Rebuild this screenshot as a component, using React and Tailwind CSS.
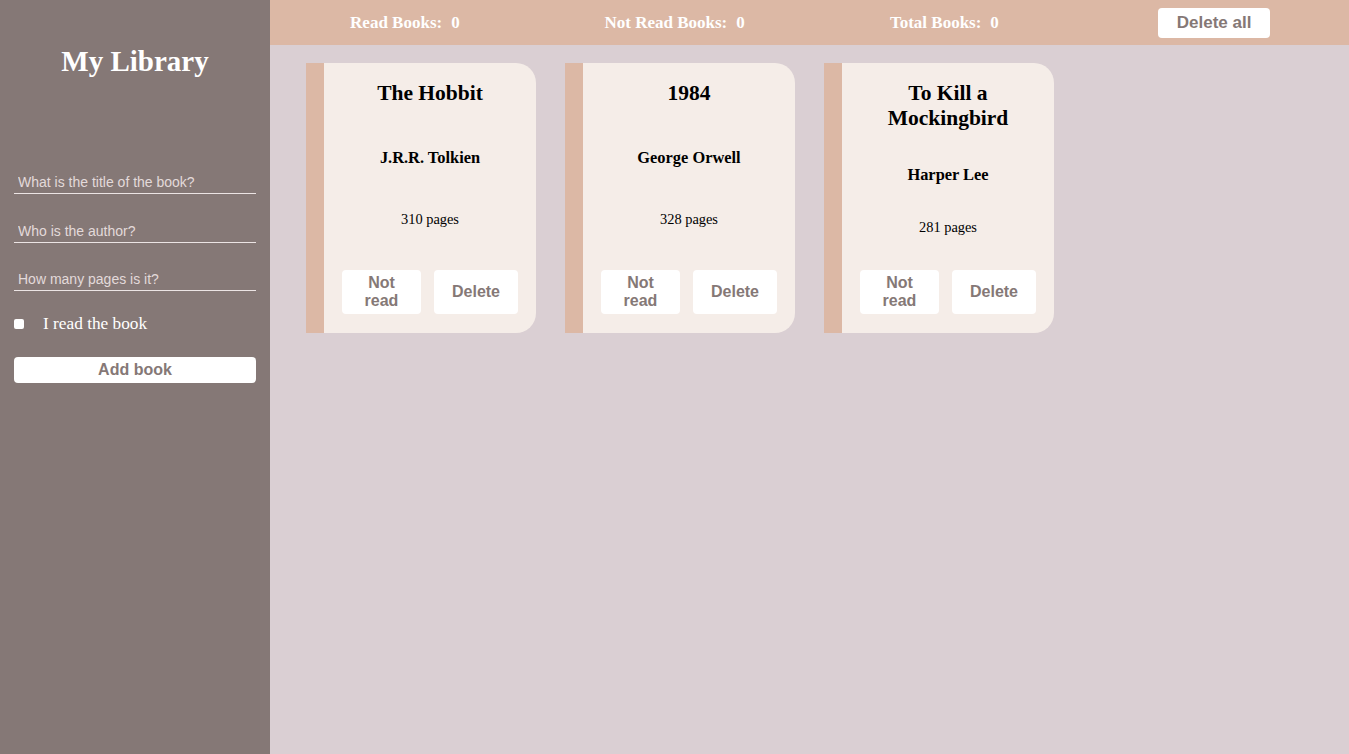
import { useState } from 'react';

const books = [
  { id: 1, title: 'The Hobbit', author: 'J.R.R. Tolkien', pages: 310, read: false },
  { id: 2, title: '1984', author: 'George Orwell', pages: 328, read: false },
  { id: 3, title: 'To Kill a Mockingbird', author: 'Harper Lee', pages: 281, read: false },
];

const serif = "font-['Liberation_Serif',serif]";
const sans = "font-['Liberation_Sans',Arial,sans-serif]";

function BookCard({ book }) {
  return (
    <div className="w-[230px] h-[270px] flex border-l-[18px] border-[#dcb8a5] bg-[#f5ede8] rounded-r-[20px]">
      <div className="flex-1 flex flex-col justify-between items-center px-[18px] pt-[18px] pb-[19px] text-black text-center">
        <h2 className={`${serif} font-bold text-[21.5px] leading-[25px]`}>{book.title}</h2>
        <p className={`${serif} font-bold text-[16.4px] leading-[18px]`}>{book.author}</p>
        <p className={`${serif} text-[14.4px] leading-[16px]`}>{book.pages} pages</p>
        <div className="w-full flex justify-between">
          <button className={`${sans} w-[79px] h-[44px] px-[16px] bg-white rounded-[4px] font-bold text-[16px] leading-[18px] text-[#857876]`}>
            {book.read ? 'Read' : 'Not read'}
          </button>
          <button className={`${sans} w-[84px] h-[44px] px-[16px] bg-white rounded-[4px] font-bold text-[16px] leading-[18px] text-[#857876]`}>
            Delete
          </button>
        </div>
      </div>
    </div>
  );
}

export default function App() {
  const [isRead, setIsRead] = useState(false);
  const readCount = 0;
  const notReadCount = 0;
  const total = 0;

  return (
    <div className="flex w-full min-h-[754px] bg-[#dacfd3]">
      <aside className="w-[270px] shrink-0 bg-[#857876] px-[14px] pt-[45px]">
        <h1 className={`${serif} font-bold text-[29px] leading-[33px] text-white text-center`}>My Library</h1>
        <form className="mt-[93px] flex flex-col" onSubmit={(e) => e.preventDefault()}>
          <div className="flex flex-col gap-[25.5px]">
            <input
              type="text"
              placeholder="What is the title of the book?"
              className={`${sans} h-[23px] w-full bg-transparent border-b border-[#ece4e4] px-[4px] text-[14px] text-white placeholder:text-[#e3dada] outline-none`}
            />
            <input
              type="text"
              placeholder="Who is the author?"
              className={`${sans} h-[23px] w-full bg-transparent border-b border-[#ece4e4] px-[4px] text-[14px] text-white placeholder:text-[#e3dada] outline-none`}
            />
            <input
              type="number"
              placeholder="How many pages is it?"
              className={`${sans} h-[23px] w-full bg-transparent border-b border-[#ece4e4] px-[4px] text-[14px] text-white placeholder:text-[#e3dada] outline-none`}
            />
          </div>
          <label className="mt-[23px] flex items-center gap-[19px] h-[20px]">
            <input
              type="checkbox"
              checked={isRead}
              onChange={(e) => setIsRead(e.target.checked)}
              className="appearance-none w-[10px] h-[10px] bg-white rounded-[2px]"
            />
            <span className={`${serif} text-[17.3px] text-white`}>I read the book</span>
          </label>
          <button
            type="submit"
            className={`${sans} mt-[23px] h-[26px] w-full bg-white rounded-[4px] font-bold text-[16px] text-[#857876]`}
          >
            Add book
          </button>
        </form>
      </aside>

      <main className="flex-1 flex flex-col">
        <header className="h-[45px] bg-[#dcb8a5] grid grid-cols-4 items-center justify-items-center">
          <span className={`${serif} font-bold text-[17px] text-white`}>
            Read Books:<span className="ml-[9px]">{readCount}</span>
          </span>
          <span className={`${serif} font-bold text-[17px] text-white`}>
            Not Read Books:<span className="ml-[9px]">{notReadCount}</span>
          </span>
          <span className={`${serif} font-bold text-[17px] text-white`}>
            Total Books:<span className="ml-[9px]">{total}</span>
          </span>
          <button className={`${sans} w-[112px] h-[30px] bg-white rounded-[4px] font-bold text-[17px] text-[#857876]`}>
            Delete all
          </button>
        </header>
        <section className="flex flex-wrap gap-[29px] pl-[36px] pt-[18px]">
          {books.map((b) => (
            <BookCard key={b.id} book={b} />
          ))}
        </section>
      </main>
    </div>
  );
}
